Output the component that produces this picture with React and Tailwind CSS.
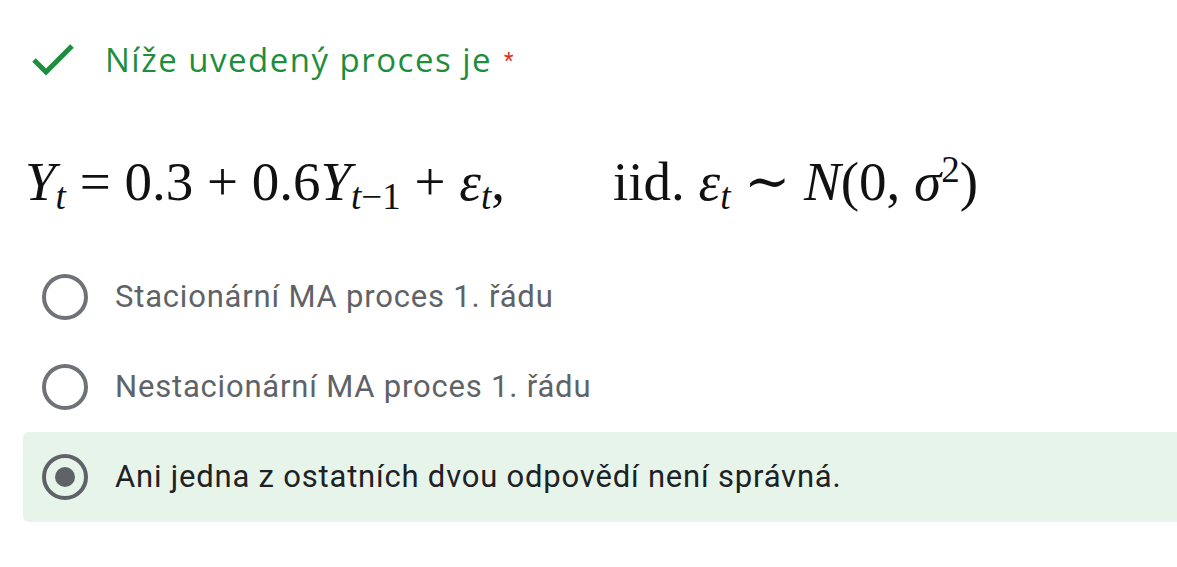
import React from 'react';

const OPTIONS = [
    { label: 'Stacionární MA proces 1. řádu', checked: false },
    { label: 'Nestacionární MA proces 1. řádu', checked: false },
    { label: 'Ani jedna z ostatních dvou odpovědí není správná.', checked: true },
];

function Radio({ checked }) {
    return (
        <span className={`w-[46px] h-[46px] rounded-full border-[4px] flex items-center justify-center shrink-0 ${checked ? 'border-[#5f6368]' : 'border-[#6f7378]'}`}>
            {checked && <span className="w-[20px] h-[20px] rounded-full bg-[#5f6368]" />}
        </span>
    );
}

export default function App() {
    return (
        <div className="w-[1177px] h-[567px] bg-white overflow-hidden" style={{ fontFamily: 'Roboto, "Noto Sans", sans-serif' }}>
            {/* Header */}
            <div className="flex items-center pt-[38px] pl-[30px] h-[80px]">
                <svg width="46" height="34" viewBox="0 0 46 34" className="shrink-0">
                    <path d="M4 18 L16 30 L42 4" fill="none" stroke="#1e8e3e" strokeWidth="5" />
                </svg>
                <span className="ml-[29px] text-[33px] tracking-[1.5px] text-[#1e8e3e] leading-none"
                      style={{ fontFamily: '"Open Sans", Roboto, sans-serif' }}>
                    Níže uvedený proces je
                </span>
                <span className="ml-[12px] text-[22px] text-[#d93025] self-start mt-[12px] leading-none">*</span>
            </div>

            {/* Equation */}
            <div className="pl-[25px] mt-[74px] h-[70px] flex items-baseline text-[55px] text-[#111] leading-none whitespace-pre"
                 style={{ fontFamily: '"Liberation Serif", "DejaVu Serif", serif' }}>
                <span className="italic">Y</span>
                <sub className="italic text-[37px]">t</sub>
                <span> = 0.3 + 0.6</span>
                <span className="italic">Y</span>
                <sub className="text-[37px]"><i>t</i>−1</sub>
                <span> + </span>
                <span className="italic">ε</span>
                <sub className="italic text-[37px]">t</sub>
                <span>,</span>
                <span className="w-[108px]" />
                <span>iid. </span>
                <span className="italic">ε</span>
                <sub className="italic text-[37px]">t</sub>
                <span> ∼ </span>
                <span className="italic">N</span>
                <span>(0, </span>
                <span className="italic">σ</span>
                <sup className="text-[37px]">2</sup>
                <span>)</span>
            </div>

            {/* Options */}
            <div className="mt-[28px] flex flex-col">
                {OPTIONS.map((o) => (
                    <div key={o.label}
                         className={`flex items-center ml-[23px] pl-[19px] h-[90px] rounded-l-[6px] ${o.checked ? 'bg-[#e6f4ea]' : ''}`}>
                        <Radio checked={o.checked} />
                        <span className={`ml-[27px] text-[31px] tracking-[0.8px] ${o.checked ? 'text-[#202124]' : 'text-[#5f6368]'}`}>
                            {o.label}
                        </span>
                    </div>
                ))}
            </div>
        </div>
    );
}
